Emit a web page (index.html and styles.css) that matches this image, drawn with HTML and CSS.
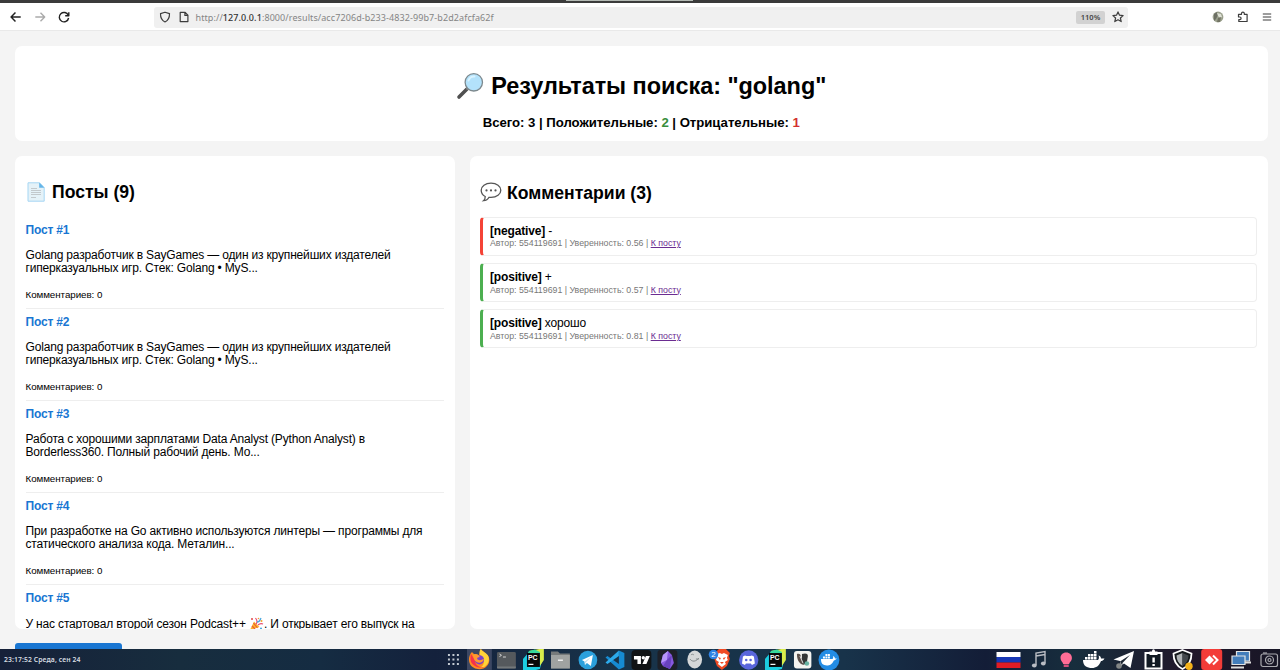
FILE: index.html
```html
<!DOCTYPE html>
<html lang="ru">
<head>
<meta charset="utf-8">
<title>Результаты поиска</title>
<link rel="stylesheet" href="styles.css">
</head>
<body>
<div class="screen">
  <div class="tabstrip"><span class="tab-edge"></span></div>
  <header class="toolbar">
    <nav class="nav">
      <svg viewBox="0 0 24 24"><path d="M7.500 12H16.500M11.500 7.800L7.300 12l4.200 4.200" transform="translate(12 12) scale(1.05) translate(-12 -12)"/></svg>
      <svg class="dim" viewBox="0 0 24 24"><path d="M7.300 12h9.200M12.500 7.800l4.200 4.200-4.200 4.200"/></svg>
      <svg viewBox="0 0 24 24"><path d="M16.300 10.300A4.700 4.700 0 1 0 16.600 13M16.800 7.200v3.500h-3.600"/></svg>
    </nav>
    <div class="urlbar">
      <svg class="shield" viewBox="0 0 12 12"><path d="M6 1.200L10.500 2.600C10.600 6.500 9.500 9.500 6 11C2.500 9.500 1.400 6.500 1.500 2.600Z"/></svg>
      <svg class="page" viewBox="0 0 12 12"><path d="M2.200 1.400h5l2.700 2.700v6.500H2.200zM6.900 1.400v3h3"/></svg>
      <span class="url">http://<b>127.0.0.1</b>:8000/results/acc7206d-b233-4832-99b7-b2d2afcfa62f</span>
      <span class="zoom">110%</span>
      <svg class="star" viewBox="0 0 12 12"><path d="M6 .9l1.500 3.300 3.600.4-2.700 2.400.8 3.600L6 8.800l-3.200 1.800.8-3.600L.9 4.600l3.600-.4z"/></svg>
    </div>
    <div class="tools">
      <svg viewBox="0 0 12 12"><g stroke="none"><circle cx="6" cy="6" r="5.400" fill="#9ba08d"/><path d="M2 3l3-2 1 3-2 4-2 2z" fill="#6d7065"/><path d="M5 2l4 1 1 3-2 1-2-2z" fill="#dfe2d6"/><path d="M6 7l3-1-1 5H5z" fill="#737565"/></g></svg>
      <svg viewBox="0 0 12 12"><path d="M1.500 5V3.300h3V2.500a1.400 1.400 0 0 1 2.800 0v.8h2.800v7.200H1.800V8.600h1a1.300 1.300 0 0 0 0-2.600H1.500z"/></svg>
      <svg viewBox="0 0 12 12"><path d="M1.800 3h8.400M1.800 6h8.400M1.800 9h8.400"/></svg>
    </div>
  </header>

  <main class="content">
    <section class="card summary">
      <h1><svg class="emoji" viewBox="0 0 28 28"><path d="M11.500 16.500L3 25" stroke="#505050" stroke-width="3.600" stroke-linecap="round"/><path d="M13 15l-2.500 2.500" stroke="#888" stroke-width="2"/><circle cx="17.800" cy="10.300" r="8.700" fill="#b3e2fb" stroke="#7d898e" stroke-width="1.300"/><path d="M12.500 8.500a6 6 0 0 1 6-4" fill="none" stroke="#d9f3ff" stroke-width="2" stroke-linecap="round"/></svg><span>Результаты поиска: "golang"</span></h1>
      <p class="totals">Всего: 3 | Положительные: <span class="pos">2</span> | Отрицательные: <span class="neg">1</span></p>
    </section>
    <div class="columns">
      <section class="card posts">
        <h2><svg class="emoji" viewBox="0 0 20 20"><path d="M2 .8h11.500l4.700 4.700v13.700H2z" fill="#e5f2f8" stroke="#a5d6f3" stroke-width="1"/><path d="M13.200.5v5.200h5.200z" fill="#64b5e8"/><path d="M5 6.500h6M5 8.500h10M5 10.500h10M5 12.500h10M5 15.500h5" stroke="#c3c9cc" stroke-width="1"/></svg><span>Посты (9)</span></h2>
        <article class="post"><a>Пост #1</a><p>Golang разработчик в SayGames — один из крупнейших издателей гиперказуальных игр. Стек: Golang • MyS...</p><small>Комментариев: 0</small></article>
        <article class="post"><a>Пост #2</a><p>Golang разработчик в SayGames — один из крупнейших издателей гиперказуальных игр. Стек: Golang • MyS...</p><small>Комментариев: 0</small></article>
        <article class="post"><a>Пост #3</a><p>Работа с хорошими зарплатами Data Analyst (Python Analyst) в Borderless360. Полный рабочий день. Мо...</p><small>Комментариев: 0</small></article>
        <article class="post"><a>Пост #4</a><p>При разработке на Go активно используются линтеры — программы для статического анализа кода. Металин...</p><small>Комментариев: 0</small></article>
        <article class="post"><a>Пост #5</a><p>У нас стартовал второй сезон Podcast++ <svg class="party" viewBox="0 0 15 14"><path d="M1 13L5 4.500 10.500 10z" fill="#fbb62b"/><path d="M3 9l3 3M4.500 6l4 5" stroke="#ee5b35" stroke-width="1.200"/><path d="M7 7C9 5 8 3 6.500 1M9 8c2-2 3-2 5-1" stroke="#e64a70" stroke-width="1.200" fill="none"/><path d="M8 5c3 0 3-2 4-4" stroke="#4aa9df" stroke-width="1.300" fill="none"/><circle cx="3" cy="2" r="1" fill="#e54545"/><circle cx="12.500" cy="4" r="1" fill="#f7a52c"/><circle cx="12" cy="11.500" r="1" fill="#45a5df"/><circle cx="9.500" cy="1.500" r=".8" fill="#f29d35"/></svg>. И открывает его выпуск на</p></article>
      </section>
      <section class="card comments">
        <h2><svg class="emoji" viewBox="0 0 22 20"><path d="M11 1.200c5.700 0 9.800 3 9.800 7s-4.100 7.200-9.800 7.200l-2-.1c-1 2-3 3.300-5.500 3.400 1.200-1 1.800-2.500 1.700-4.200C2.700 13.200 1.200 11 1.200 8.200c0-4 4.100-7 9.800-7z" fill="#fff" stroke="#555" stroke-width="1.300"/><g fill="#555"><circle cx="6.500" cy="8.400" r="1.100"/><circle cx="11" cy="8.400" r="1.100"/><circle cx="15.500" cy="8.400" r="1.100"/></g></svg><span>Комментарии (3)</span></h2>
        <article class="comment negative"><div><b>[negative]</b> -</div><div class="meta">Автор: 554119691 | Уверенность: 0.56 | <a>К посту</a></div></article>
        <article class="comment"><div><b>[positive]</b> +</div><div class="meta">Автор: 554119691 | Уверенность: 0.57 | <a>К посту</a></div></article>
        <article class="comment"><div><b>[positive]</b> хорошо</div><div class="meta">Автор: 554119691 | Уверенность: 0.81 | <a>К посту</a></div></article>
      </section>
    </div>
    <div class="button"></div>
  </main>

  <footer class="taskbar">
    <span class="clock">23:17:52 Среда, сен 24</span>
    <div class="apps">
      <svg viewBox="0 0 27 21"><g fill="#c3cad2"><path d="M8 5h2v2H8zm4.500 0h2v2h-2zM17 5h2v2h-2zM8 9.500h2v2H8zm4.500 0h2v2h-2zm4.500 0h2v2h-2zM8 14h2v2H8zm4.500 0h2v2h-2zm4.500 0h2v2h-2z"/></g></svg>
      <svg viewBox="0 0 27 21"><path d="M1 0h25v21H1z" fill="#3c4762"/><path d="M15 0c1 2 3 2 4 4 5 2 6 9 2 13-4 5-14 4-17-2-2-4-1-9 2-12l2 2 5 1z" fill="#ff8a20"/><path d="M15 0c1 3 8 4 8 10 0 5-4 9-9 9 5-3 5-8 2-11-3-2-3-6-1-8z" fill="#ffd438"/><path d="M5 5c-1 5-1 9 4 12 3 2 7 2 9 1-6 1-9-3-9-7z" fill="#f5324b"/><circle cx="13.500" cy="10.800" r="4.700" fill="#7b42c8"/><path d="M7 6c3-2 5-1 7 2-4 0-3 3-1 3 2 1 3-1 5-1-1 5-8 5-10 0z" fill="#ff9930"/></svg>
      <svg viewBox="0 0 27 21"><rect x="4" y="3" width="19" height="16.500" rx="1.500" fill="#55595d"/><path d="M4 17.500h19v2H4z" fill="#73777a"/><path d="M6.500 5l2 1.300-2 1.300M10 8h3" fill="none" stroke="#e3e3e3" stroke-width=".9"/></svg>
      <svg viewBox="0 0 27 21"><path d="M3 10l6-7 14-3v8l-3 12-4 1H3z" fill="#1ccde0"/><path d="M9 2l15-3v12l-4 6V4z" fill="#d9ec4b"/><path d="M9 2l6-1.500 5 2.500v1H8z" fill="#37d99d"/><path d="M7 4h13v14H7z" fill="#080808"/><text class="pc" x="8" y="10.800">PC</text><path d="M8.500 14.800h5v1.200h-5z" fill="#fff"/></svg>
      <svg viewBox="0 0 27 21"><path d="M4 2.500h7l2 2h10v15H4z" fill="#777b7b"/><path d="M4 6h19v13.500H4z" fill="#a0a3a1"/><path d="M11 10.500h5v1.500h-5z" fill="#eee"/></svg>
      <svg viewBox="0 0 27 21"><circle cx="14" cy="11" r="9.400" fill="#2ba0dc"/><path d="M8 11l11-5-2 11-4-3-2 2-.5-3.500z" fill="#fff"/><path d="M11 12.500L17 8l-5 5.200V16z" fill="#b8dcec"/></svg>
      <svg viewBox="0 0 27 21"><path d="M18 1.500L23.500 4v14L18 20.500 4.500 8.500 6.500 7 18 15z" fill="#168bd2"/><path d="M18 1.500L4.500 13.500l2 1.500L18 7z" fill="#2cabec"/></svg>
      <svg viewBox="0 0 27 21"><rect x="3.500" y="1" width="20" height="20" rx="4" fill="#111416"/><path d="M6 7h7v8h-3.500v-4.500H6zM18 7h4l-3.500 8h-4z" fill="#fff"/><circle cx="15.400" cy="8.700" r="1.700" fill="#fff"/></svg>
      <svg viewBox="0 0 27 21"><rect x="3.500" y="1" width="20" height="20" rx="3" fill="#1d2028"/><path d="M14 2l4 4 2 8-4 6-7-3-2-3 2-8z" fill="#8758df"/><path d="M14 2l-1 9-6 3 2-8z" fill="#b796fa"/><path d="M13 11l5-5-2 14-7-3z" fill="#6842bd"/></svg>
      <svg viewBox="0 0 27 21"><ellipse cx="13.800" cy="10.500" rx="7.400" ry="9" fill="#d4d7d8"/><path d="M9 10c2 3 6 3 9-1M10 6c1-1 2-1 3 0M15 10h3" fill="none" stroke="#858b8d"/></svg>
      <svg viewBox="0 0 27 21"><path d="M9 2l2-2h7l2 2 2 2-1 3 1 3-3 7-5 4-5-4-3-8V4z" fill="#f04b24"/><path d="M9 5l3-1 2 1 2-1 4 2-1 3 1 2-3 2 1 2-4 3-4-3 1-2-3-2 1-3z" fill="#fff"/><path d="M10 8l3 1-1 2zM18 8l-3 1 1 2zM12 13h4l-2 2z" fill="#f04b24"/><circle cx="5.500" cy="5.500" r="4.800" fill="#2f82e4"/><text class="badge" x="3.200" y="8.400">2</text></svg>
      <svg viewBox="0 0 27 21"><circle cx="13.800" cy="11" r="9.700" fill="#5966dc"/><path d="M10 6.500c2 .8 5 .8 7 0l2 1 1 7-3 1.500-1-1.500h-5L10 16l-3-1.500 1-7z" fill="#fff"/><circle cx="11.300" cy="11" r="1.300" fill="#5966dc"/><circle cx="15.700" cy="11" r="1.300" fill="#5966dc"/></svg>
      <svg viewBox="0 0 27 21"><path d="M3 10l6-7 14-3v8l-3 12-4 1H3z" fill="#1ccde0"/><path d="M9 2l15-3v12l-4 6V4z" fill="#d9ec4b"/><path d="M9 2l6-1.500 5 2.500v1H8z" fill="#37d99d"/><path d="M7 4h13v14H7z" fill="#080808"/><text class="pc" x="8" y="10.800">PC</text><path d="M8.500 14.800h5v1.200h-5z" fill="#fff"/></svg>
      <svg viewBox="0 0 27 21"><rect x="5" y="2" width="17.500" height="17.500" rx="3" fill="#f4f4f1"/><path d="M8 5c2-1 4 0 4 3l3 8c-5-1-7-5-7-11z" fill="#5b4f4a"/><path d="M13 5c3-1 6-1 6 2l-1 6-3 3-2-5z" fill="#343737"/><circle cx="18" cy="14.500" r="2.300" fill="#67b2a2"/><path d="M11 7l3 7" stroke="#ddd"/></svg>
      <svg viewBox="0 0 27 21"><circle cx="14" cy="11" r="10.500" fill="#238ce4"/><path d="M6 10h11.500c1-.5 1-2 .5-3 1.500.5 2 1.500 2 2.500h2c-1 1.500-2 1.500-3 2-2 4-4 5-7 5-4 0-6-2-6-6.500zM8 7.500h2v2H8zm2.500 0h2v2h-2zm2.500 0h2v2h-2zm-2.500-2.500h2v2h-2zm2.500 0h2v2h-2z" fill="#fff"/></svg>
    </div>
    <div class="tray">
      <svg viewBox="0 0 29 21"><path d="M2.500 3h24v5h-24z" fill="#fff"/><path d="M2.500 8h24v5.500h-24z" fill="#1737b5"/><path d="M2.500 13.500h24V19h-24z" fill="#e11c24"/></svg>
      <svg viewBox="0 0 29 21"><path d="M13 16V4l9-1.500V14M13 7l9-1.500" fill="none" stroke="#babdc4" stroke-width="1.400"/><ellipse cx="11.300" cy="16.500" rx="2.400" ry="1.900" fill="#babdc4"/><ellipse cx="20.300" cy="14.500" rx="2.400" ry="1.900" fill="#babdc4"/></svg>
      <svg viewBox="0 0 29 21"><path d="M14.200 3.500c3.500 0 5.700 2.500 5.700 5.400 0 3-2.500 4-2.700 6h-6c-.2-2-2.700-3-2.700-6 0-2.900 2.200-5.400 5.700-5.400z" fill="#ff6d96"/><path d="M11.700 15.500h5v2.500h-5z" fill="#d34e7a"/></svg>
      <svg viewBox="0 0 29 21"><path d="M2 11h15c1.200-1 1.200-3 .5-4.500C19.500 7 20 8.500 20 9.500h3.500C22.500 11.500 21 12 20 12c-2 5-5 7-9 7-5 0-9-2-9-8zM4 8h2.500v2.500H4zm3 0h2.500v2.500H7zm3 0h2.500v2.500H10zm3 0h2.500v2.500H13zM7 5h2.500v2.500H7zm3 0h2.500v2.500H10zm3 0h2.500v2.500H13zm0-3h2.500v2.500H13z" fill="#fff"/></svg>
      <svg viewBox="0 0 29 21"><path d="M3.500 10.500L24 2 20.500 19 14 14.500 11 17l-1-5z" fill="#fff"/><path d="M10 12.500L20 6l-7.500 8V17z" fill="#1b2431"/><circle cx="9" cy="17" r="2.800" fill="#828585"/></svg>
      <svg viewBox="0 0 29 21"><path d="M6.500 4h16v15.500h-16z" fill="#111923" stroke="#fff" stroke-width="2"/><path d="M10.500 2.500h2.500c0-3 3-3 3 0h2.500v3.500h-8zM13.400 8.500h2.400v5h-2.400zm0 6.500h2.400v2h-2.400z" fill="#fff"/></svg>
      <svg viewBox="0 0 29 21"><path d="M14.500 1l9 3.500c0 7-2 12-9 15.500-7-3.500-9-8.500-9-15.500z" fill="#15191c" stroke="#fff" stroke-width="1.800"/><path d="M14.500 4v13c-4-2.500-6-6-6-10.500z" fill="#aeb2b4"/><path d="M14.500 4v13c4-2.500 6-6 6-10.500z" fill="#43484c"/><circle cx="21" cy="17.300" r="3.700" fill="#f6b319"/></svg>
      <svg viewBox="0 0 29 21"><rect x="4.200" y="0" width="21" height="21" rx="3" fill="#f33c38"/><path d="M8 11l4.500-4.500L17 11l-4.500 4.500z" fill="#fff"/><path d="M16 6.500l4.500 4.500-4.500 4.500" fill="none" stroke="#fff" stroke-width="2"/></svg>
      <svg viewBox="0 0 29 21"><path d="M10.500 2.500h13v9.500h-13z" fill="#437dbb" stroke="#e2e4e5" stroke-width="1.200"/><path d="M18 13.500h7" stroke="#ddd" stroke-width="2"/><path d="M6 7h13v8.500H6z" fill="#437dbb" stroke="#e2e4e5" stroke-width="1.200"/><path d="M5 18.500h13" stroke="#ddd" stroke-width="2"/></svg>
      <svg viewBox="0 0 29 21"><g fill="none" stroke="#a9a9af" stroke-width="1.200"><rect x="6" y="5" width="16.500" height="12.500" rx="2"/><path d="M8 4h4"/><circle cx="14.500" cy="11" r="4"/><circle cx="14.500" cy="11" r="1.500"/></g></svg>
    </div>
  </footer>
</div>
</body>
</html>
```
FILE: styles.css
```css
* { box-sizing: border-box; }
body { margin: 0; background: #f4f4f4; font-family: "Liberation Sans", Arial, sans-serif; font-size: 12px; letter-spacing: -0.168px; color: #000; }
svg { display: block; flex: none; }
.screen { display: flex; flex-direction: column; width: 1280px; height: 670px; overflow: hidden; }
.tabstrip { height: 3px; flex: none; background: #3b3b3b; display: flex; padding-left: 566px; }
.tab-edge { width: 127px; height: 1px; background: #b4bab4; }
.toolbar { height: 28px; flex: none; background: #fff; border-bottom: 1px solid #e9e9e9; display: flex; align-items: center; padding: 1px 0 0 4px; }
.toolbar svg { fill: none; stroke: #3d3d3d; stroke-width: 1.2; stroke-linejoin: round; }
.nav { display: flex; width: 150px; }
.nav svg { width: 24px; height: 24px; stroke-width: 1.4; stroke: #222; }
.nav .dim { stroke: #aaa; }
.urlbar { width: 974px; height: 21px; background: #f0f0f0; border-radius: 3px; display: flex; align-items: center; padding: 0 4px 0 5px; }
.urlbar svg { width: 12px; height: 12px; }
.urlbar .page { margin-left: 6.500px; }
.url { margin-left: 6px; font-family: "Noto Sans", sans-serif; font-size: 9px; letter-spacing: 0.09px; color: #858585; white-space: nowrap; }
.url b { color: #303030; font-weight: 500; }
.zoom { margin-left: auto; width: 29px; height: 13px; border-radius: 2px; background: #d2d2d2; font: 600 7.500px/13px "Noto Sans", sans-serif; letter-spacing: 0; color: #444; text-align: center; }
.star { margin-left: 7px; }
.tools { display: flex; gap: 12.500px; margin-left: 84px; }
.tools svg { width: 12px; height: 12px; }
.content { flex: 1; min-height: 0; overflow: hidden; padding: 15px 12px 0 15px; display: flex; flex-direction: column; }
.card { background: #fff; border-radius: 7px; padding: 11px 11px 11px 10.5px; overflow: hidden; }
.summary { height: 95px; flex: none; text-align: center; }
h1, h2 { display: flex; align-items: center; font-weight: bold; letter-spacing: 0; }
h1 { justify-content: center; margin: 15.7px 0; height: 27px; font-size: 23.46px; letter-spacing: -0.03px; gap: 7px; }
h1 .emoji { width: 28px; height: 28px; }
.totals { margin: 0; font-size: 13.2px; letter-spacing: -0.035px; line-height: 16px; font-weight: bold; }
.pos { color: #388e3c; }
.neg { color: #d32f2f; }
.columns { margin-top: 15px; height: 472.500px; flex: none; display: grid; grid-template-columns: 440px 798px; gap: 15px; }
h2 { height: 20px; margin: 14.6px 0; font-size: 17.6px; }
h2 span { padding-top: 2px; }
.posts h2 { gap: 6.500px; }
.posts .emoji { width: 20px; height: 20px; }
.comments { padding-left: 10px; padding-top: 11.500px; }
.comments h2 { gap: 5px; }
.comments .emoji { width: 22px; height: 20px; }
.post { height: 92px; padding-top: 7.33px; border-bottom: 1px solid #eee; line-height: 13.5px; }
.posts .post:nth-of-type(1) { margin-top: 15px; }
.post a { display: block; color: #1976d2; font-weight: bold; }
.post p { margin: 11.2px 0 12.2px; }
.post small { display: block; font-size: 9.78px; letter-spacing: -0.05px; }
.post .party { display: inline-block; width: 15px; height: 14px; vertical-align: -3px; }
.comment { height: 39px; margin-bottom: 7.33px; padding: 7px 7px; border: 1px solid #eee; border-left: 3px solid #4caf50; border-radius: 4px; line-height: 13.5px; }
.comment.negative { border-left-color: #f44336; }
.meta { color: #777; font-size: 8.8px; letter-spacing: 0; line-height: 10.5px; }
.meta a { color: #6b2c91; text-decoration: underline; }
.button { width: 107px; height: 30px; flex: none; margin-top: 14.500px; background: #1976d2; border-radius: 3px; }
.taskbar { height: 21px; flex: none; display: flex; align-items: center; background: linear-gradient(90deg, #162139 0, #172d3e 14%, #152c42 25%, #14213c 34%, #183349 48%, #18334a 66%, #131d37 77%, #172e3d 84%, #21172a 93%, #171626 100%); }
.clock { width: 439.600px; padding-left: 4px; font: 600 6.800px/20px "Noto Sans", sans-serif; letter-spacing: 0.1px; color: #d6dce1; }
.apps, .tray { display: flex; letter-spacing: 0; }
.apps svg { width: 26.857px; height: 21px; }
.tray { margin-left: auto; margin-right: -3.500px; }
.tray svg { width: 29px; height: 21px; }
.pc { font: bold 7px "Liberation Sans", sans-serif; fill: #fff; }
.badge { font: 8px "Liberation Sans", sans-serif; fill: #fff; }
```
